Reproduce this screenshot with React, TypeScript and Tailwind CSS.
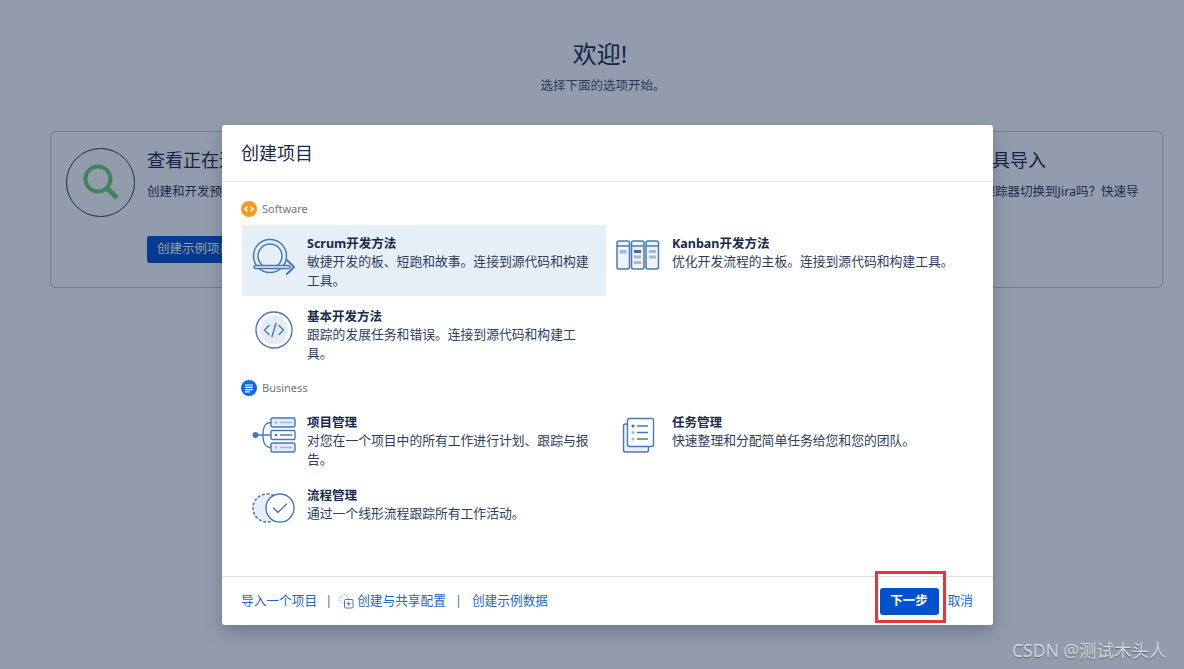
const font = "font-['Noto_Sans','Noto_Sans_CJK_SC',sans-serif]";

const ScrumIcon = () => (
  <svg width="48" height="44" viewBox="0 0 48 44" fill="none" stroke="#4a78b5" strokeWidth="1.5" strokeLinecap="round" strokeLinejoin="round">
    <circle cx="20" cy="21" r="16.5" />
    <circle cx="20" cy="21" r="12" />
    <rect x="4" y="30.5" width="36" height="3" rx="1.5" fill="#e6eef8" />
    <path d="M37 25l7 7-7 7" strokeWidth="2" />
  </svg>
);

const KanbanIcon = () => (
  <svg width="48" height="44" viewBox="0 0 48 44" fill="none">
    {[2, 16.500, 31].map((x) => (
      <g key={x}>
        <rect x={x} y="6" width="12.500" height="28" rx="2" fill="#eef2fa" stroke="#4a78b5" strokeWidth="1.500" />
        <path d={`M${x} 11h12.500`} stroke="#4a78b5" strokeWidth="1.500" />
      </g>
    ))}
    <rect x="4.500" y="15" width="7" height="3.500" fill="#a9b8d0" />
    <rect x="19" y="15" width="7" height="3" fill="#3f6cb0" />
    <rect x="19" y="20.500" width="7" height="3" fill="#a9b8d0" />
    <rect x="19" y="26" width="7" height="3" fill="#a9b8d0" />
    <rect x="34" y="15" width="7" height="3" fill="#a9b8d0" />
    <rect x="34" y="20.500" width="7" height="3" fill="#a9b8d0" />
  </svg>
);

const BasicIcon = () => (
  <svg width="48" height="44" viewBox="0 0 48 44" fill="none" stroke="#4a78b5" strokeLinecap="round" strokeLinejoin="round">
    <circle cx="24" cy="22" r="18" strokeWidth="1.400" />
    <circle cx="24" cy="22" r="14" fill="#e4ebf5" stroke="none" />
    <path d="M19 17.500l-4.500 4.500 4.500 4.500M29 17.500l4.500 4.500-4.500 4.500M26 15.500l-4 13" strokeWidth="1.400" />
  </svg>
);

const ProjectIcon = () => (
  <svg width="48" height="44" viewBox="0 0 48 44" fill="none" stroke="#4a78b5" strokeWidth="1.400">
    <circle cx="5.500" cy="21" r="3" fill="#4a78b5" stroke="none" />
    <path d="M8 21h13M21 8.500c-6 0-8 4-8 12.500s2 12.500 8 12.500" />
    <rect x="21" y="4" width="24" height="9" rx="1.500" fill="#e4ebf5" />
    <rect x="21" y="16.500" width="24" height="9" rx="1.500" fill="#fff" />
    <rect x="21" y="29" width="24" height="9" rx="1.500" fill="#e4ebf5" />
    <circle cx="26" cy="8.500" r="1.200" fill="#a9b8d0" stroke="none" />
    <circle cx="26" cy="21" r="1.300" fill="#3f6cb0" stroke="none" />
    <circle cx="26" cy="33.500" r="1.200" fill="#a9b8d0" stroke="none" />
    <path d="M30 8.500h12M30 33.500h12" stroke="#a9b8d0" />
    <path d="M30 21h12" />
  </svg>
);

const TaskIcon = () => (
  <svg width="48" height="44" viewBox="0 0 48 44" fill="none" stroke="#4a78b5" strokeWidth="1.400">
    <rect x="8.500" y="10" width="25" height="28" rx="2" fill="#e9eff8" />
    <rect x="12.500" y="4.500" width="26" height="28" rx="2" fill="#fff" />
    <circle cx="18" cy="12" r="1.500" fill="#3f6cb0" stroke="none" />
    <circle cx="18" cy="18.500" r="1.500" fill="#a9b8d0" stroke="none" />
    <circle cx="18" cy="25" r="1.500" fill="#a9b8d0" stroke="none" />
    <path d="M22 12h11M22 18.500h11M22 25h11" />
  </svg>
);

const ProcessIcon = () => (
  <svg width="48" height="44" viewBox="0 0 48 44" fill="none" stroke="#4a78b5" strokeWidth="1.400" strokeLinecap="round" strokeLinejoin="round">
    <circle cx="17" cy="21" r="14" fill="#e8eef7" strokeDasharray="1.500 3.200" strokeWidth="1.600" />
    <circle cx="30" cy="21" r="14" fill="#fff" />
    <path d="M23.500 21l4.500 4.500 8.500-8.500" />
  </svg>
);

const items = [
  { title: "Scrum开发方法", desc: "敏捷开发的板、短跑和故事。连接到源代码和构建工具。", icon: <ScrumIcon />, active: true },
  { title: "Kanban开发方法", desc: "优化开发流程的主板。连接到源代码和构建工具。", icon: <KanbanIcon /> },
  { title: "基本开发方法", desc: "跟踪的发展任务和错误。连接到源代码和构建工具。", icon: <BasicIcon /> },
];

const businessItems = [
  { title: "项目管理", desc: "对您在一个项目中的所有工作进行计划、跟踪与报告。", icon: <ProjectIcon /> },
  { title: "任务管理", desc: "快速整理和分配简单任务给您和您的团队。", icon: <TaskIcon /> },
  { title: "流程管理", desc: "通过一个线形流程跟踪所有工作活动。", icon: <ProcessIcon /> },
];

type Item = { title: string; desc: string; icon: React.ReactNode; active?: boolean };

const Tile = ({ item }: { item: Item }) => (
  <div className={`flex h-[71px] w-[364px] pl-2 pt-[10px] ${item.active ? "bg-[#e6eef8]" : ""}`}>
    <div className="w-12 shrink-0">{item.icon}</div>
    <div className="ml-[9px] w-[290px] -mt-px">
      <div className="text-[12.5px] font-bold leading-[19px] text-[#172b4d]">{item.title}</div>
      <div className="-mt-px text-[12.8px] leading-[19px] text-[#2c3e5d]">{item.desc}</div>
    </div>
  </div>
);

const SectionHead = ({ label, children }: { label: string; children: React.ReactNode }) => (
  <div className="flex h-4 items-center gap-[5px] pl-[19px]">
    {children}
    <span className="mt-px text-[11px] text-[#6b778c]">{label}</span>
  </div>
);

export default function App() {
  return (
    <div className={`relative h-[669px] overflow-hidden bg-white text-[#172b4d] ${font}`}>
      {/* page behind the dialog */}
      <div className="flex flex-col items-center pt-[39px] pl-4">
        <h1 className="text-[24px] leading-[30px]">欢迎!</h1>
        <p className="mt-[7px] ml-[6px] text-[12.5px] leading-[20px] text-[#42526e]">选择下面的选项开始。</p>
      </div>
      <div className="mx-[50px] mt-[35px] w-[1113px] h-[157px] rounded-[5px] border border-[#c1c7d0] flex pl-[15px] pt-4">
        <div className="flex">
          <div className="flex h-[69px] w-[69px] items-center justify-center rounded-full border border-[#253858]">
            <svg width="40" height="40" viewBox="0 0 40 40" fill="none" stroke="#6fd070">
              <circle cx="17" cy="16" r="12.500" strokeWidth="4" />
              <path d="M26 25l10 10" strokeWidth="5" />
            </svg>
          </div>
          <div className="ml-3">
            <div className="text-[18px] leading-6">查看正在进行的项目</div>
            <div className="mt-[11px] text-[12.5px] leading-[18px] text-[#253858]">创建和开发预配置的示例项目</div>
            <div className="mt-[35px] flex h-[27px] w-[120px] items-center rounded-[3px] bg-[#0052cc] px-[10px] text-[12.5px] text-white">创建示例项目</div>
          </div>
        </div>
        <div className="ml-auto w-[242px]">
          <div className="text-[18px] leading-6">从其他工具导入</div>
          <div className="mt-[11px] whitespace-nowrap text-[12.5px] leading-[18px] text-[#253858]">从其他问题跟踪器切换到Jira吗？快速导</div>
        </div>
      </div>

      {/* dimmed overlay + dialog */}
      <div className="absolute inset-0 bg-[#091e42]/[0.44] pl-[222px] pt-[125px]">
        <div className="relative flex h-[500px] w-[771px] flex-col rounded-[3px] bg-white shadow-[0_8px_16px_rgba(9,30,66,0.25)]">
          <div className="flex h-[57px] shrink-0 items-center border-b border-[#dfe1e6] pl-[19px] text-[18px]">创建项目</div>

          <div className="flex-1 pt-[19px]">
            <SectionHead label="Software">
              <svg width="16" height="16" viewBox="0 0 16 16" fill="none">
                <circle cx="8" cy="8" r="8" fill="#f79a1f" />
                <path d="M6.500 5.500L4 8l2.500 2.500M9.500 5.500L12 8l-2.500 2.500" stroke="#fff" strokeWidth="1.500" />
              </svg>
            </SectionHead>
            <div className="mt-2 ml-5 grid grid-cols-[365px_364px] gap-y-[2px]">
              <Tile item={items[0]} />
              <Tile item={items[1]} />
              <Tile item={items[2]} />
            </div>

            <div className="mt-[11px]">
              <SectionHead label="Business">
                <svg width="16" height="16" viewBox="0 0 16 16" fill="none">
                  <circle cx="8" cy="8" r="8" fill="#0f6ae6" />
                  <path d="M4 5h8M4 7.300h8M4 9.600h8M4 11.800h5" stroke="#fff" strokeWidth="1.200" />
                </svg>
              </SectionHead>
            </div>
            <div className="mt-2 ml-5 grid grid-cols-[365px_364px] gap-y-[2px]">
              <Tile item={businessItems[0]} />
              <Tile item={businessItems[1]} />
              <Tile item={businessItems[2]} />
            </div>
          </div>

          <div className="flex h-[49px] shrink-0 items-center border-t border-[#dfe1e6] pl-[19px] pr-5 text-[12.7px] text-[#1f66cc]">
            <span>导入一个项目</span>
            <span className="ml-[8px] text-[#5e6c84]">|</span>
            <svg className="ml-[7px]" width="15" height="15" viewBox="0 0 15 15" fill="none" stroke="#7f97b8" strokeWidth="1">
              <circle cx="5" cy="5" r="4.200" strokeDasharray="1.200 1.500" />
              <rect x="5.500" y="5.500" width="8.500" height="8.500" rx="1" fill="#fff" stroke="#4a78b5" />
              <path d="M9.750 7.700v4.100M7.700 9.750h4.100" stroke="#4a78b5" />
            </svg>
            <span className="ml-[3px]">创建与共享配置</span>
            <span className="ml-[9px] text-[#5e6c84]">|</span>
            <span className="ml-[10px]">创建示例数据</span>
            <button className="ml-auto flex h-[27px] w-[59px] items-center justify-center rounded-[3px] bg-[#0052cc] text-[12.5px] font-bold text-white">下一步</button>
            <span className="ml-[9px]">取消</span>
          </div>

          {/* red annotation round the button */}
          <div className="absolute left-[653px] top-[446px] h-[52px] w-[71px] border-[3px] border-[#e8353b]" />
        </div>
      </div>

      {/* watermark */}
      <div className="absolute left-[1012px] top-[638px] whitespace-nowrap text-[17.5px] leading-6 text-white/70 [text-shadow:0_1px_1px_rgba(0,0,0,0.35)]">CSDN @测试木头人</div>
    </div>
  );
}
